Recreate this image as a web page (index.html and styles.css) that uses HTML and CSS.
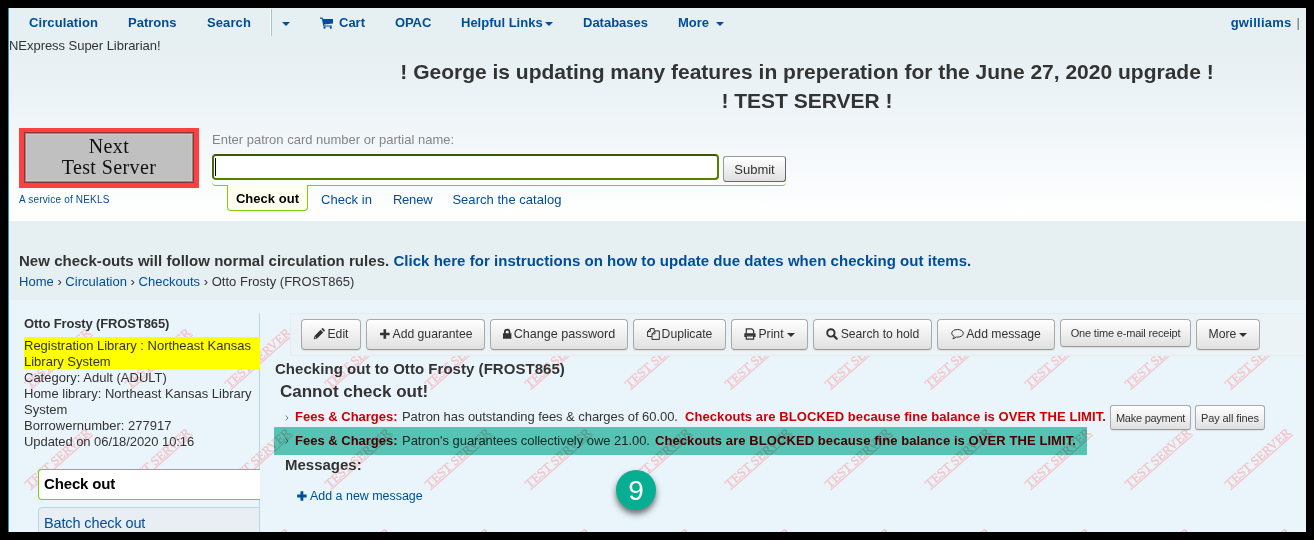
FILE: index.html
```html
<!DOCTYPE html>
<html lang="en">
<head>
<meta charset="utf-8">
<title>Koha: Checking out to Otto Frosty</title>
<link rel="stylesheet" href="styles.css">
</head>
<body>
<div class="frame">
  <header class="header">
    <nav class="nav">
      <a class="n-circ" href="#">Circulation</a>
      <a class="n-patrons" href="#">Patrons</a>
      <a class="n-search" href="#">Search</a>
      <a class="n-drop" href="#"><i class="caret"></i></a>
      <a class="n-cart" href="#"><svg class="cart" viewBox="0 0 13 12"><path d="M0 .6h2.6l.4 1.3H13v4.6L4.200 7.600l.2.9h7.400v1.100H3.400L1.900 1.700H0z"/><circle cx="4.500" cy="10.700" r="1.100"/><circle cx="10.800" cy="10.700" r="1.100"/></svg>Cart</a>
      <a class="n-opac" href="#">OPAC</a>
      <a class="n-links" href="#">Helpful Links<i class="caret"></i></a>
      <a class="n-db" href="#">Databases</a>
      <a class="n-more" href="#">More <i class="caret"></i></a>
      <span class="user"><a href="#">gwilliams</a><span class="bar">|</span></span>
    </nav>
    <div class="role">NExpress Super Librarian!</div>
    <div class="notice"><div>! George is updating many features in preperation for the June 27, 2020 upgrade !</div><div>! TEST SERVER !</div></div>
    <div class="searchrow">
      <div class="brand">
        <div class="logo"><div class="plate"><span>Next</span><span>Test Server</span></div></div>
        <a class="service" href="#">A service of NEKLS</a>
      </div>
      <div class="finder">
        <label class="hint">Enter patron card number or partial name:</label>
        <div class="entry"><div class="field"><i class="cursor"></i></div><button class="submit">Submit</button></div>
        <div class="edge"></div>
        <div class="tabs"><a class="tab on" href="#">Check out</a><a class="tab t-in" href="#">Check in</a><a class="tab t-renew" href="#">Renew</a><a class="tab" href="#">Search the catalog</a></div>
      </div>
    </div>
  </header>
  <div class="crumbs">
    <div class="rules">New check-outs will follow normal circulation rules. <a href="#">Click here for instructions on how to update due dates when checking out items.</a></div>
    <div class="path"><a href="#">Home</a> › <a href="#">Circulation</a> › <a href="#">Checkouts</a> › Otto Frosty (FROST865)</div>
  </div>
  <main class="main">
    <svg class="watermark" aria-hidden="true"><defs><pattern id="wm" x="-9" y="0" width="100" height="100" patternUnits="userSpaceOnUse"><g transform="translate(30.500 90) rotate(-41.500)"><text x="0" y="-1.600" textLength="83" lengthAdjust="spacingAndGlyphs">TEST SERVER</text><path d="M0 0H83"/></g></pattern></defs><rect width="100%" height="100%" fill="url(#wm)"/></svg>
    <aside class="side">
      <div class="patron">Otto Frosty (FROST865)</div>
      <div class="reg">Registration Library : Northeast Kansas Library System</div>
      <div class="line">Category: Adult (ADULT)</div>
      <div class="line">Home library: Northeast Kansas Library System</div>
      <div class="line">Borrowernumber: 277917</div>
      <div class="line upd">Updated on 06/18/2020 10:16</div>
      <div class="menu"><a class="item on" href="#">Check out</a><a class="item" href="#">Batch check out</a></div>
    </aside>
    <section class="content">
      <div class="toolbar">
        <button class="btn b1"><svg viewBox="0 0 12 12"><path d="M.8 11.200l.7-3.300L7.600 1.800l2.600 2.600L4.100 10.500zM8.300 1.100l.8-.8q.5-.4 1 0l1.600 1.600q.4.500 0 1l-.8.8z"/><path d="M1.800 8.900l1.300 1.300" stroke="#eee" stroke-width=".8"/></svg>Edit</button>
        <button class="btn b2"><svg viewBox="0 0 12 12"><path d="M4.500 1.200h2.600v3.500h3.500v2.600H7.100v3.500H4.500V7.300H1V4.700h3.500z"/></svg>Add guarantee</button>
        <button class="btn b3"><svg class="lock" viewBox="0 0 9 12"><path d="M0 5.300h1V4a3.200 3.200 0 0 1 6.400 0v1.300h1v5.400H0zM2.700 5.300h3V4a1.500 1.500 0 0 0-3 0z" fill-rule="evenodd"/></svg>Change password</button>
        <button class="btn b4"><svg class="wide" viewBox="0 0 13 12"><path d="M4.800 8.500H.6V3.500L3.300.6h3.900v2.200M3.300.7v2.900H.7M12.300 2.900H7.900L5 5.800v5.600h7.300zM7.900 3v2.900H5.100" fill="none" stroke="#333"/></svg>Duplicate</button>
        <button class="btn b5"><svg viewBox="0 0 12 12"><path d="M2.300 5.500V.8h5.500l1.800 1.800v2.900M2.300 8v3.100h7.300V8z" fill="none" stroke="#333" stroke-width="1.200"/><path d="M.3 5.300h11.300V9H9.900V7.700H2V9H.3z"/></svg>Print<i class="caret"></i></button>
        <button class="btn b6"><svg viewBox="0 0 12 12"><circle cx="4.900" cy="4.900" r="3.700" fill="none" stroke="#333" stroke-width="1.900"/><path d="M7.600 7.600l3.100 3.100" stroke="#333" stroke-width="2.200" stroke-linecap="round"/></svg>Search to hold</button>
        <button class="btn b7"><svg class="wide" viewBox="0 0 13 12"><path d="M6.500 1.500c3.200 0 5.800 1.600 5.800 3.800S9.700 9.100 6.500 9.100q-.7 0-1.400-.1-1.300 1.400-3.200 1.700 1-.9 1.200-2.300Q.7 7.300.7 5.300c0-2.200 2.600-3.800 5.800-3.800z" fill="none" stroke="#333"/></svg>Add message</button>
        <button class="btn b8">One time e-mail receipt</button>
        <button class="btn b9">More<i class="caret"></i></button>
      </div>
      <h4 class="title">Checking out to Otto Frosty (FROST865)</h4>
      <h3 class="cannot">Cannot check out!</h3>
      <div class="fee"><svg class="chev" viewBox="0 0 4 6"><path d="M.7.5L3 3 .7 5.500"/></svg><b class="f-name">Fees &amp; Charges:</b><span class="f-patron">Patron has outstanding fees &amp; charges of 60.00.</span><b class="f-block">Checkouts are BLOCKED because fine balance is OVER THE LIMIT.</b><button class="btn small mk">Make payment</button><button class="btn small pay">Pay all fines</button></div>
      <div class="fee second"><svg class="chev" viewBox="0 0 4 6"><path d="M.7.5L3 3 .7 5.500"/></svg><b class="f-name">Fees &amp; Charges:</b><span class="f-guar">Patron's guarantees collectively owe 21.00.</span><b class="f-block">Checkouts are BLOCKED because fine balance is OVER THE LIMIT.</b><div class="marker"></div></div>
      <h4 class="messages">Messages:</h4>
      <a class="addmsg" href="#"><svg viewBox="0 0 12 12"><path d="M4.500 1.300h2.800v3.300h3.300v2.800H7.300v3.300H4.500V7.400H1.200V4.600h3.300z"/></svg>Add a new message</a>
      <div class="step">9</div>
    </section>
  </main>
</div>
</body>
</html>
```
FILE: styles.css
```css
* { box-sizing: border-box; }
body {
  margin: 0;
  padding: 8px;
  height: 540px;
  overflow: hidden;
  background: #000;
  color: #333;
  font: 13px/16px "Liberation Sans", Arial, sans-serif;
}
a { color: #004d99; text-decoration: none; }
h3, h4 { margin: 0; }
button { font-family: inherit; color: #333; margin: 0; padding: 0; }
.frame {
  display: flex;
  flex-direction: column;
  width: 1298px;
  height: 524px;
  overflow: hidden;
  border-left: 1px solid #3d8fa9;
  background: #eaf5fb;
}
.caret {
  display: inline-block;
  border: 4px solid transparent;
  border-top-color: currentColor;
  border-bottom: 0;
  vertical-align: 1px;
}

/* Header */
.header {
  flex: none;
  height: 213px;
  background: linear-gradient(#e6eff2 18%, #eff5f8 53%, #fdfefe 92%, #fff);
}
.nav {
  display: flex;
  height: 29px;
  padding-left: 20px;
  font-weight: bold;
  line-height: 29px;
  white-space: pre;
}
.n-circ { width: 99px; letter-spacing: .1px; }
.n-patrons { width: 79px; }
.n-search { width: 64px; letter-spacing: .1px; }
.n-drop {
  width: 49px;
  height: 27px;
  margin-top: 1px;
  padding-left: 10px;
  border-left: 1px solid #a6c4cf;
  box-shadow: -1px 0 #fff;
  line-height: 27px;
}
.n-cart { width: 75px; }
.cart { width: 13px; height: 12px; margin-right: 6px; vertical-align: -2px; fill: #004d99; }
.n-opac { width: 66px; letter-spacing: -.1px; }
.n-links { width: 122px; }
.n-links .caret { margin-left: 2px; }
.n-db { width: 95px; }
.n-more .caret { margin-left: 3px; }
.user { margin-left: auto; padding-right: 6px; letter-spacing: .27px; }
.bar { margin-left: 5px; color: #667; font-weight: normal; letter-spacing: 0; }
.role { height: 20px; padding-top: 1px; letter-spacing: -.04px; }
.notice {
  height: 71px;
  padding-left: 299px;
  text-align: center;
  font-size: 21px;
  font-weight: bold;
  line-height: 29px;
}
.searchrow { display: flex; padding-left: 10px; }
.brand { width: 193px; }
.logo { width: 180px; height: 60px; padding: 4px 5px 5px; background: #ff4040; }
.plate {
  display: flex;
  flex-direction: column;
  align-items: center;
  height: 51px;
  padding: 3px 0 0;
  border: 1px solid #843838;
  box-shadow: inset 0 0 0 1px #8d8d8d, inset 0 0 0 2px #cacaca;
  background: #c0c0c0;
  color: #111;
  font: 20px/21px "Liberation Serif", serif;
  letter-spacing: .4px;
}
.service { display: block; margin-top: 4px; font-size: 10px; letter-spacing: .18px; }
.finder { width: 574px; }
.hint { display: block; height: 26px; padding-top: 4px; color: #858585; }
.entry { display: flex; align-items: flex-start; }
.field {
  width: 507px;
  height: 26px;
  margin-right: 4px;
  padding: 2px 1px;
  border: 2px solid #538200;
  border-top-color: #3a5a02;
  border-left-color: #456c02;
  border-radius: 4px;
  background: #fff;
}
.cursor { display: block; width: 1px; height: 18px; background: #000; }
.submit {
  width: 63px;
  height: 26px;
  margin-top: 2px;
  border: 1px solid #999;
  border-right-color: #666;
  border-bottom-color: #666;
  border-radius: 3px;
  background: linear-gradient(#fff, #e0e0e0);
  font-size: 13px;
}
.edge { height: 5px; margin-top: -1px; border-bottom: 1px solid #85ca11; border-radius: 0 0 4px 4px; }
.tabs { display: flex; padding-left: 15px; line-height: 27px; }
.tab { margin-right: 20px; letter-spacing: .04px; }
.tab.on {
  width: 81px;
  height: 26px;
  margin: -1px 13px 0 0;
  border: 1px solid #85ca11;
  border-top: 0;
  border-radius: 0 0 4px 4px;
  background: #fffff0;
  color: #000;
  font-weight: bold;
  text-align: center;
}
.tab.t-in { margin-right: 21px; }
.tab.t-renew { letter-spacing: -.2px; }

/* Breadcrumbs */
.crumbs { flex: none; height: 79px; padding: 31px 0 0 10px; background: #e6eff2; }
.rules { height: 21px; font-size: 15px; font-weight: bold; line-height: 18px; letter-spacing: .035px; }
.path { line-height: 18px; letter-spacing: .015px; }

/* Body */
.main { position: relative; display: flex; flex: 1; min-height: 0; }
.watermark { position: absolute; inset: 0; width: 100%; height: 100%; }
.watermark text { font: 12.500px "Liberation Serif", serif; fill: #f2c3c9; stroke: #f2c3c9; stroke-width: .3; }
.watermark path { stroke: #f1c6cc; stroke-width: 1.300; }
.side {
  position: relative;
  flex: none;
  width: 251px;
  margin-top: 13px;
  padding-left: 15px;
  border-right: 1px solid #b9d8d9;
}
.patron { height: 24px; padding-top: 3px; font-weight: bold; letter-spacing: -.13px; }
.reg { height: 32px; margin-right: -1px; padding-top: 1px; margin-bottom: 1px; background: #ff0; }
.upd { letter-spacing: -.07px; }
.menu { display: flex; flex-direction: column; gap: 7px; margin: 19px -1px 0 14px; }
.item {
  flex: none;
  height: 31px;
  padding-left: 5px;
  border: 1px solid #b9d8d9;
  border-radius: 4px 0 0 4px;
  background: #e8eef4;
  font-size: 14.500px;
  line-height: 30px;
  letter-spacing: -.13px;
}
.item.on {
  border-color: #85ca11;
  border-right: 0;
  background: #fff;
  color: #000;
  font-size: 15px;
  font-weight: bold;
  line-height: 28px;
  letter-spacing: -.15px;
}
.content { position: relative; flex: 1; padding-top: 13px; }
.toolbar {
  display: flex;
  align-items: flex-start;
  gap: 5px;
  height: 43px;
  margin-left: 30px;
  padding: 5px 0 0 10px;
  border: 1px solid #e3eef1;
  border-right: 0;
  background: #ebf3f6;
}
.btn {
  display: flex;
  align-items: center;
  justify-content: center;
  flex: none;
  height: 31px;
  padding-bottom: 1px;
  border: 1px solid #aaa;
  border-bottom-color: #999;
  border-radius: 4px;
  background: linear-gradient(#fff, #e0e0e0);
  box-shadow: 0 1px 1px rgba(0, 0, 0, .08);
  font-size: 12.200px;
  white-space: nowrap;
}
.btn svg { width: 12px; height: 12px; margin-right: 2px; fill: #333; }
.btn svg.wide { width: 13px; }
.btn svg.lock { width: 9px; }
.btn .caret { margin: 1px 0 0 3px; }
.b1 { width: 60px; }
.b2 { width: 119px; }
.b3 { width: 138px; font-size: 12.600px; }
.b4 { width: 93px; }
.b5 { width: 77px; }
.b6 { width: 119px; }
.b6 svg { margin-right: 3px; }
.b7 { width: 118px; }
.b8 { width: 131px; height: 28px; font-size: 11px; letter-spacing: -.18px; }
.b9 { width: 64px; }
.title { height: 23px; padding: 4px 0 0 15px; font-size: 15px; line-height: 18px; letter-spacing: .04px; }
.cannot { height: 25px; padding: 3px 0 0 20px; font-size: 17px; line-height: 20px; }
.fee {
  display: flex;
  align-items: flex-start;
  height: 23px;
  padding-left: 25px;
  line-height: 26px;
  white-space: nowrap;
}
.chev { flex: none; width: 4px; height: 6px; margin: 11px 6px 0 0; fill: none; stroke: #777; }
.fee b { color: #c00; }
.f-name { width: 107px; }
.f-patron { width: 283px; letter-spacing: -.05px; }
.f-guar { width: 253px; letter-spacing: -.04px; }
.f-block { width: 425px; letter-spacing: .08px; }
.small { height: 25px; margin-top: 1px; padding: 0; border-radius: 3px; font-size: 11px; letter-spacing: -.25px; }
.mk { width: 81px; margin-right: 4px; }
.pay { width: 70px; letter-spacing: -.1px; }
.second { position: relative; height: 28px; line-height: 28px; }
.marker {
  position: absolute;
  left: 14px;
  top: 0;
  width: 813px;
  height: 28px;
  background: #5dccb8;
  mix-blend-mode: multiply;
}
.messages { height: 32px; padding: 1px 0 0 25px; font-size: 15px; line-height: 18px; }
.addmsg { display: flex; align-items: center; padding-left: 36px; font-size: 12.450px; line-height: 18px; }
.addmsg svg { width: 12px; height: 12px; margin-right: 2px; fill: #004d99; }
.step {
  position: absolute;
  left: 356px;
  top: 170px;
  width: 40px;
  height: 40px;
  border-radius: 50%;
  background: #07ae91;
  box-shadow: 0 4px 6px rgba(0, 0, 0, .55);
  color: #fff;
  font-size: 28px;
  line-height: 42px;
  text-align: center;
}
```
